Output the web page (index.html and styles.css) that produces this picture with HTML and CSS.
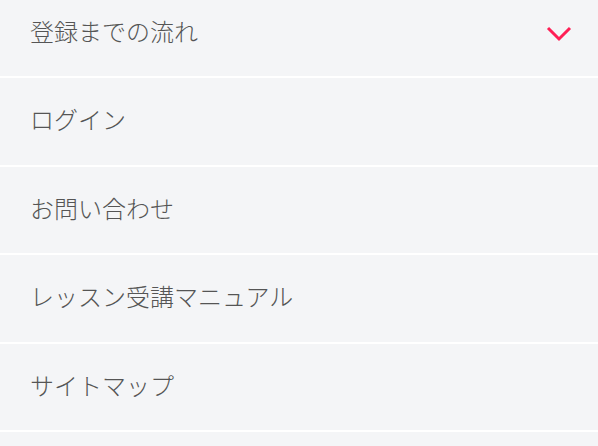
FILE: index.html
```html
<!DOCTYPE html>
<html lang="ja">
<head>
  <meta charset="UTF-8">
  <title>メニュー</title>
  <meta name="viewport" content="width=device-width, initial-scale=1.0">
  <link rel="stylesheet" href="styles.css">
</head>
<body>
  <ul class="menu">
    <li class="menu-item open">
      <span class="label">登録までの流れ</span>
      <svg class="chevron" width="26" height="16" viewBox="0 0 26 16">
        <path d="M2 2 L13 13 L24 2" fill="none" stroke="#ff1f55" stroke-width="3"/>
      </svg>
    </li>
    <li class="menu-item"><span class="label">ログイン</span></li>
    <li class="menu-item"><span class="label">お問い合わせ</span></li>
    <li class="menu-item"><span class="label">レッスン受講マニュアル</span></li>
    <li class="menu-item"><span class="label">サイトマップ</span></li>
  </ul>
</body>
</html>
```

FILE: styles.css
```css
body { margin:0; background:#f4f5f7; font-family:"Noto Sans CJK JP","Noto Sans",sans-serif; color:#555; }
.menu {
  list-style:none;
  margin:-10.5px 0 0 0;
  padding:0;
}
.menu-item {
  height:86.5px;
  display:flex;
  align-items:center;
  justify-content:space-between;
  padding:0 26px 0 30px;
  border-bottom:2px solid #fff;
  background:#f4f5f7;
}
.menu-item .label {
  font-size:24px;
  font-weight:300;
  line-height:1;
  margin-top:-4px;
}
.chevron { display:block; margin-top:3px; }
```
